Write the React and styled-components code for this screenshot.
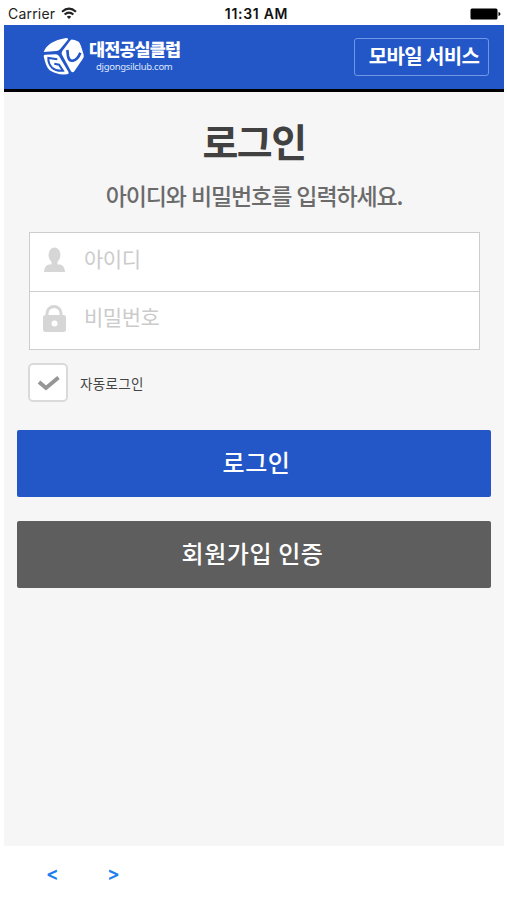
import React, { useState } from 'react';
import styled, { createGlobalStyle } from 'styled-components';

const GlobalStyle = createGlobalStyle`
  * {
    box-sizing: border-box;
  }

  body {
    margin: 0;
    background: #fff;
    font-family: 'Liberation Sans', 'Noto Sans CJK KR', sans-serif;
  }

  button, input {
    font-family: 'Noto Sans CJK KR', sans-serif;
    padding: 0;
  }
`;

const Screen = styled.div`
  width: 507px;
  height: 900px;
  padding: 0 3px 0 4px;
  display: flex;
  flex-direction: column;
  overflow: hidden;
`;

const StatusBar = styled.div`
  height: 25px;
  padding: 2px 3px 0 4px;
  display: grid;
  grid-template-columns: 1fr auto 1fr;
  align-items: center;
  font-family: Inter, sans-serif;
  font-size: 14px;
  line-height: 22px;
  color: #222;
`;

const Carrier = styled.div`
  display: flex;
  align-items: center;
  gap: 6px;
  letter-spacing: 0.2px;
`;

const Clock = styled.div`
  padding-left: 4px;
  font-weight: 600;
  font-size: 14px;
  letter-spacing: 0.7px;
  color: #111;
`;

const Battery = styled.svg`
  justify-self: end;
`;

const Header = styled.header`
  height: 67px;
  padding: 0 15px 0 39px;
  display: flex;
  justify-content: space-between;
  align-items: center;
  background: #2357c8;
  border-bottom: 3px solid #000;
`;

const Brand = styled.div`
  padding-bottom: 2px;
  display: flex;
  align-items: center;
  gap: 4px;
  color: #fff;
`;

const BrandText = styled.div`
  display: flex;
  flex-direction: column;
`;

const BrandName = styled.div`
  font-family: 'Noto Sans CJK KR', sans-serif;
  font-weight: 900;
  font-size: 17.5px;
  line-height: 20px;
  letter-spacing: -0.9px;
`;

const BrandDomain = styled.div`
  padding-left: 7px;
  font-family: 'Noto Sans', sans-serif;
  font-size: 9.5px;
  line-height: 15px;
  letter-spacing: -0.3px;
  color: #dfe8fb;
`;

const ServiceButton = styled.button`
  width: 135px;
  height: 38px;
  padding: 0 0 2px 5px;
  border: 1px solid #6f97e6;
  border-radius: 3px;
  background: transparent;
  color: #fff;
  font-size: 20px;
  font-weight: 700;
  line-height: 30px;
  letter-spacing: -0.6px;
  white-space: nowrap;
`;

const Content = styled.main`
  height: 754px;
  padding: 25px 13px 0;
  display: flex;
  flex-direction: column;
  background: #f6f6f6;
`;

const Title = styled.h1`
  margin: 0;
  text-align: center;
  font-family: 'Noto Sans CJK KR', sans-serif;
  font-size: 39px;
  font-weight: 700;
  line-height: 46px;
  letter-spacing: -1.5px;
  color: #414141;
`;

const Guide = styled.p`
  margin: 16px 0 0;
  text-align: center;
  font-family: 'Noto Sans CJK KR', sans-serif;
  font-size: 23px;
  font-weight: 500;
  line-height: 32px;
  letter-spacing: -1.1px;
  word-spacing: 1px;
  color: #6b6b6b;
  white-space: nowrap;
`;

const Fields = styled.div`
  height: 118px;
  margin: 21px 11px 0 12px;
  border: 1px solid #cdcdcd;
  background: #fff;
`;

const Field = styled.label`
  height: 58px;
  padding: 0 12px 5px;
  display: flex;
  align-items: center;
  gap: 18px;

  & + & {
    border-top: 1px solid #cdcdcd;
  }
`;

const Input = styled.input`
  flex: 1;
  min-width: 0;
  height: 40px;
  padding-bottom: 4px;
  border: 0;
  outline: 0;
  background: transparent;
  font-size: 21px;
  letter-spacing: -0.5px;
  color: #444;

  &::placeholder {
    color: #cbcbcb;
    opacity: 1;
  }
`;

const AutoLogin = styled.label`
  margin: 13px 0 0 11px;
  display: flex;
  align-items: center;
  align-self: flex-start;
  gap: 12px;
  font-family: 'Noto Sans CJK KR', sans-serif;
  font-size: 13.5px;
  line-height: 20px;
  letter-spacing: 0.3px;
  color: #444;
`;

const HiddenCheck = styled.input`
  display: none;
`;

const CheckBox = styled.span`
  width: 40px;
  height: 39px;
  display: flex;
  align-items: center;
  justify-content: center;
  border: 2px solid #dadada;
  border-radius: 5px;
  background: #fff;
`;

const ActionButton = styled.button`
  height: 67px;
  flex: none;
  margin-top: ${({ $gap }) => $gap}px;
  padding: 0 ${({ $shift }) => $shift || 0}px 4px 5px;
  border: 0;
  border-radius: 2px;
  background: ${({ $color }) => $color};
  color: #fff;
  font-size: 24px;
  font-weight: 500;
  letter-spacing: 0.6px;
`;

const NavBar = styled.nav`
  flex: 1;
  padding: 0 0 0 42px;
  display: flex;
  align-items: center;
  gap: 48px;
`;

const NavButton = styled.button`
  width: 13px;
  border: 0;
  background: none;
  font-family: Inter, sans-serif;
  font-size: 19px;
  font-weight: 600;
  color: #1c80ee;
`;

const Logo = () => (
  <svg width="42" height="39" viewBox="130 110 126 117">
    <path d="M132 155Q144 122 199 113Q208 113 204 119L181 147Q177 152 170 152Z" fill="#fff" />
    <path d="M213 119Q216 115 237 124Q242 127 252 163Q254 169 249 176L224 213Q219 219 214 213L187 163Q184 158 188 152Z" fill="#fff" />
    <path d="M132 167Q132 163 138 163L168 162Q175 162 178 167L206 214Q209 220 202 222Q172 225 150 210Q138 199 132 167Z" fill="#fff" />
    <path d="M203 149L205 167Q208 183 220 181Q234 178 242 157" fill="none" stroke="#2357c8" strokeWidth="8" />
    <path d="M173 177L146 173Q145 189 157 202Q170 213 190 211L178 193L164 190" fill="none" stroke="#2357c8" strokeWidth="6" />
  </svg>
);

const WifiIcon = () => (
  <svg width="16" height="13" viewBox="0 0 16 13" fill="none" stroke="#222" strokeWidth="2">
    <path d="M1 4.8Q8 -1.5 15 4.8M3.6 7.6Q8 3.7 12.4 7.6" />
    <path d="M5.8 9.7Q8 7.8 10.2 9.7L8 12Z" fill="#222" stroke="none" />
  </svg>
);

const UserIcon = () => (
  <svg width="24" height="26" viewBox="0 0 24 26" fill="#d6d6d6">
    <ellipse cx="12.5" cy="8" rx="6" ry="7.5" />
    <path d="M9.5 13h6v5h-6zM2 25q.5-7 5-7.500h11q4.500.5 5 7.500z" />
  </svg>
);

const LockIcon = () => (
  <svg width="24" height="28" viewBox="0 0 24 28">
    <path d="M5 13V9.5a7 7 0 0 1 14 0V13" fill="none" stroke="#d6d6d6" strokeWidth="3" />
    <rect x="1" y="11" width="23" height="17" rx="2.5" fill="#d6d6d6" />
    <circle cx="12.5" cy="19.5" r="3" fill="#fff" />
  </svg>
);

const CheckIcon = () => (
  <svg width="24" height="18" viewBox="0 0 24 18">
    <path d="M3 8L10 14L22.5 3.500" fill="none" stroke="#969696" strokeWidth="4" />
  </svg>
);

const App = () => {
  const [autoLogin, setAutoLogin] = useState(true);

  return (
    <Screen>
      <GlobalStyle />
      <StatusBar>
        <Carrier>
          Carrier
          <WifiIcon />
        </Carrier>
        <Clock>11:31 AM</Clock>
        <Battery width="31" height="12" viewBox="0 0 31 12">
          <rect x="0.5" y="0.5" width="27" height="11" rx="1.5" />
          <path d="M28.5 4q2 .5 2 2t-2 2z" />
        </Battery>
      </StatusBar>

      <Header>
        <Brand>
          <Logo />
          <BrandText>
            <BrandName>대전공실클럽</BrandName>
            <BrandDomain>djgongsilclub.com</BrandDomain>
          </BrandText>
        </Brand>
        <ServiceButton>모바일 서비스</ServiceButton>
      </Header>

      <Content>
        <Title>로그인</Title>
        <Guide>아이디와 비밀번호를 입력하세요.</Guide>

        <Fields>
          <Field>
            <UserIcon />
            <Input type="text" placeholder="아이디" />
          </Field>
          <Field>
            <LockIcon />
            <Input type="password" placeholder="비밀번호" />
          </Field>
        </Fields>

        <AutoLogin>
          <HiddenCheck
            type="checkbox"
            checked={autoLogin}
            onChange={(e) => setAutoLogin(e.target.checked)}
          />
          <CheckBox>{autoLogin && <CheckIcon />}</CheckBox>
          자동로그인
        </AutoLogin>

        <ActionButton $color="#2357c8" $gap={28}>로그인</ActionButton>
        <ActionButton $color="#5e5e5e" $gap={24} $shift={8}>회원가입 인증</ActionButton>
      </Content>

      <NavBar>
        <NavButton>&lt;</NavButton>
        <NavButton>&gt;</NavButton>
      </NavBar>
    </Screen>
  );
};

export default App;
